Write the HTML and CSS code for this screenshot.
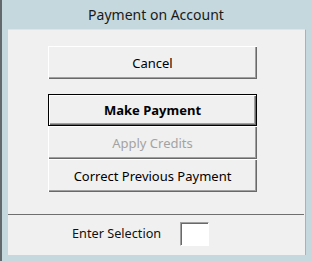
FILE: index.html
```html
<!DOCTYPE html>
<html>
  <head>
    <title>Payment on Account</title>
    <link rel="stylesheet" href="styles.css">
  </head>
  <body>
    <div class="window">
      <div class="title">Payment on Account</div>
      <div class="panel">
        <div class="buttons">
          <button class="btn">Cancel</button>
          <div class="stack">
            <button class="btn default">Make Payment</button>
            <button class="btn" disabled>Apply Credits</button>
            <button class="btn">Correct Previous Payment</button>
          </div>
        </div>
        <div class="footer">
          <label class="label" for="selection">Enter Selection</label>
          <input id="selection" class="entry" autocomplete="off" />
        </div>
      </div>
    </div>
  </body>
</html>
```

FILE: styles.css
```css
  html, body { margin: 0; padding: 0; }
  body { background: #c5d8dd; font-family: "Noto Sans", "Open Sans", sans-serif; color: #000; }

  .window { width: 312px; height: 261px; box-sizing: border-box; border-left: 2px solid #62686c; padding-left: 6px; }
  .title { height: 29px; line-height: 30px; text-align: center; font-size: 14px; color: #1a1a1a; padding-right: 8px; }

  .panel { width: 298px; height: 226px; box-sizing: border-box; background: #f0f0f0; border-top: 1px solid #dde5e8; border-right: 1px solid #a9b1b4; display: flex; flex-direction: column; }

  .buttons { padding: 16px 0 0 40px; display: flex; flex-direction: column; gap: 15px; height: 184px; box-sizing: border-box; }
  .stack { display: flex; flex-direction: column; }

  .btn { width: 209px; height: 33px; margin: 0; padding: 0; border: none; background: #f0f0f0; font-family: inherit; font-size: 13px; color: #000; box-shadow: inset 1px 1px #fff, inset -1px -1px #696969, inset -2px -2px #a0a0a0; }
  .btn.default { height: 32px; border: 1px solid #000; font-weight: bold; }
  .btn:disabled { color: #a3a3a3; }

  .footer { border-top: 1px solid #6f6f6f; margin-right: 1px; flex: 1; display: flex; align-items: center; padding: 0 0 2px 64px; gap: 19px; }
  .label { font-size: 12.7px; color: #111; line-height: 16px; padding-bottom: 2px; }
  .entry { width: 29px; height: 24px; box-sizing: border-box; margin: 0; padding: 0; background: #fff; border: 1px solid; border-color: #a0a0a0 #fff #fff #a0a0a0; box-shadow: inset 1px 1px #696969; outline: none; }
```
